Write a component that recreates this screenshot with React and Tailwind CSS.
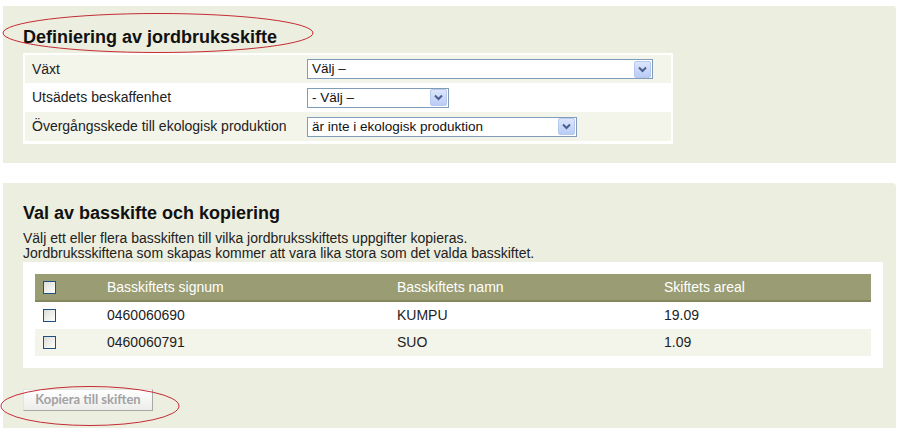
import React from "react";

const font = { fontFamily: '"Liberation Sans", Arial, sans-serif' };

function Arrow() {
  return (
    <div className="w-[17px] h-[17px] border border-[#B7C9EF] rounded-[2px] bg-gradient-to-b from-[#DCE6FB] to-[#B9CCF6] flex items-center justify-center">
      <svg width="9" height="7" viewBox="0 0 9 7">
        <path d="M1 1.5 L4.5 5 L8 1.5" fill="none" stroke="#4A5F8D" strokeWidth="2" />
      </svg>
    </div>
  );
}

function Select({ w, text }) {
  return (
    <div
      className="h-[20px] border border-[#7F9DB9] bg-white flex items-center justify-between pl-[4px] pr-[1px] text-[13.5px] text-[#111]"
      style={{ width: w }}
    >
      <span className="leading-none">{text}</span>
      <Arrow />
    </div>
  );
}

function Checkbox() {
  return (
    <div className="w-[13px] h-[13px] border border-[#1C5180] bg-gradient-to-br from-[#DCDCD7] to-[#FFFFFF]" />
  );
}

export default function App() {
  const rows = [
    { label: "Växt", sel: <Select w={346} text="Välj –" />, bg: "bg-[#F3F4EA]", h: "h-[28px]" },
    { label: "Utsädets beskaffenhet", sel: <Select w={142} text="- Välj –" />, bg: "bg-white", h: "h-[29px]" },
    { label: "Övergångsskede till ekologisk produktion", sel: <Select w={270} text="är inte i ekologisk produktion" />, bg: "bg-[#F3F4EA]", h: "h-[29px]" },
  ];
  const data = [
    { s: "0460060690", n: "KUMPU", a: "19.09", bg: "bg-white" },
    { s: "0460060791", n: "SUO", a: "1.09", bg: "bg-[#F3F4EA]" },
  ];
  return (
    <div className="relative w-[898px] h-[437px] bg-white overflow-hidden" style={font}>
      <div className="pt-[6px] pl-[3px]">
        {/* Panel 1 */}
        <div className="w-[893px] h-[157px] bg-[#ECEEDF] rounded-tr-[3px] pl-[20px] pt-[21px]">
          <h1 className="text-[18px] font-bold leading-[21px] text-[#111]">Definiering av jordbruksskifte</h1>
          <div className="mt-[5px] w-[650px] bg-white pt-[2px] px-[2px] pb-[3px]">
            {rows.map((r) => (
              <div key={r.label} className={`flex items-center ${r.bg} ${r.h}`}>
                <div className="w-[282px] pl-[7px] text-[14px] text-[#222]">{r.label}</div>
                {r.sel}
              </div>
            ))}
          </div>
        </div>

        {/* Panel 2 */}
        <div className="mt-[20px] w-[893px] h-[245px] bg-[#ECEEDF] rounded-tr-[4px] pl-[20px] pt-[20px]">
          <h2 className="text-[18px] font-bold leading-[21px] text-[#111]">Val av basskifte och kopiering</h2>
          <p className="mt-[7px] text-[14px] leading-[15px] text-[#222]">
            Välj ett eller flera basskiften till vilka jordbruksskiftets uppgifter kopieras.
            <br />
            Jordbruksskiftena som skapas kommer att vara lika stora som det valda basskiftet.
          </p>
          <div className="mt-[1px] w-[860px] bg-white p-[12px]">
            <div className="flex items-center h-[28px] bg-[#9A9D73] border-b-2 border-[#84875F] text-white text-[14px]">
              <div className="w-[72px] pl-[8px]"><Checkbox /></div>
              <div className="w-[290px]">Basskiftets signum</div>
              <div className="w-[267px]">Basskiftets namn</div>
              <div>Skiftets areal</div>
            </div>
            {data.map((d) => (
              <div key={d.s} className={`flex items-center h-[27px] ${d.bg} text-[14px] text-[#222]`}>
                <div className="w-[72px] pl-[8px]"><Checkbox /></div>
                <div className="w-[290px]">{d.s}</div>
                <div className="w-[267px]">{d.n}</div>
                <div>{d.a}</div>
              </div>
            ))}
          </div>
          <button
            className="mt-[21px] w-[130px] h-[22px] bg-gradient-to-b from-white to-[#ECECEA] border border-t-[#E4E4E0] border-l-[#E4E4E0] border-r-[#A8A8A4] border-b-[#A8A8A4] text-[#A2A2A2] font-bold text-[13px] flex items-center justify-center"
            style={{ fontFamily: 'Lato, "Open Sans", sans-serif' }}
          >
            Kopiera till skiften
          </button>
        </div>
      </div>

      {/* Annotation ellipses */}
      <svg className="absolute inset-0 pointer-events-none" width="898" height="437">
        <ellipse cx="158" cy="33" rx="155" ry="19.5" fill="none" stroke="#C42C34" strokeWidth="1" />
        <ellipse cx="90" cy="406" rx="89" ry="19.5" fill="none" stroke="#C42C34" strokeWidth="1" />
      </svg>
    </div>
  );
}
